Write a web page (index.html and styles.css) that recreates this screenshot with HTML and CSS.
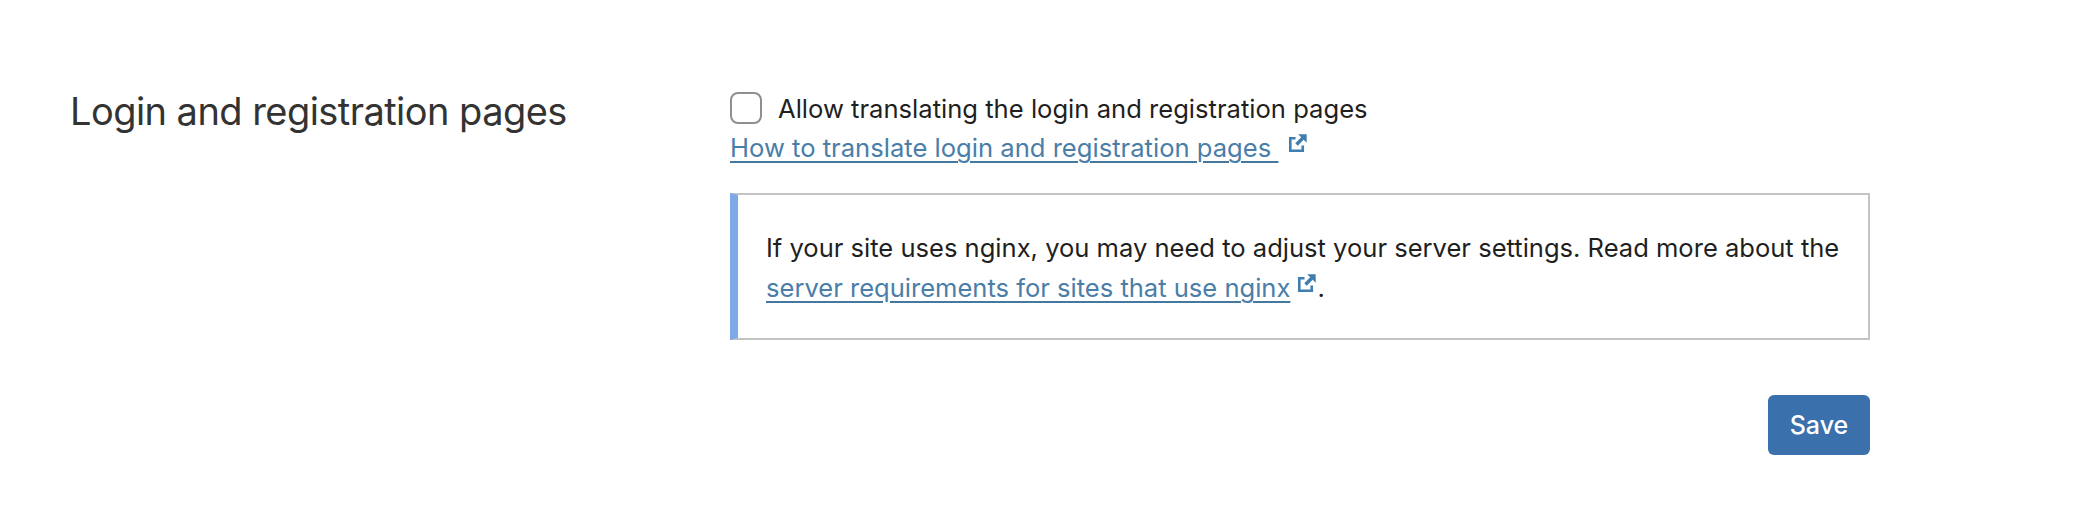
FILE: index.html
```html
<!DOCTYPE html>
<html lang="en">
<head>
  <meta charset="UTF-8" />
  <title>Login and registration pages</title>
  <link rel="stylesheet" href="styles.css">
</head>
<body>
  <div class="section">
    <h3 class="section-title">Login and registration pages</h3>
    <div class="section-body">
      <label class="check-row">
        <input type="checkbox" class="check" />
        <span>Allow translating the login and registration pages</span>
      </label>
      <p class="help-row">
        <a href="#" class="link">How to translate login and registration pages&nbsp;</a>
        <svg class="ext-icon ext-icon-wide" viewBox="0 0 16 16"><path d="M6.5 3H1.5v11.5H13V9.5h-2V12.5H3.5V5h3z M8.5 1H15v6.5l-2.3-2.3-4.5 4.5-1.9-1.9 4.5-4.5z"/></svg>
      </p>
      <div class="notice">
        If your site uses nginx, you may need to adjust your server settings. Read more about the
        <a href="#" class="link">server requirements for sites that use nginx</a><svg class="ext-icon" viewBox="0 0 16 16"><path d="M6.5 3H1.5v11.5H13V9.5h-2V12.5H3.5V5h3z M8.5 1H15v6.5l-2.3-2.3-4.5 4.5-1.9-1.9 4.5-4.5z"/></svg>.
      </div>
      <div class="actions">
        <button class="save-btn">Save</button>
      </div>
    </div>
  </div>
</body>
</html>
```

FILE: styles.css
```css
body {
  margin: 0;
  background: #fff;
  font-family: Inter, "Liberation Sans", sans-serif;
  color: #1f1f1f;
  font-size: 25.6px;
}
.section {
  display: flex;
  padding: 88px 220px 0 70px;
}
.section-title {
  width: 660px;
  margin: 0;
  font-size: 38px;
  letter-spacing: -0.55px;
  line-height: 47px;
  font-weight: 400;
  color: #333;
}
.section-body {
  flex: 1;
}
.check-row {
  display: flex;
  align-items: center;
  gap: 16px;
  height: 40px;
}
.check {
  appearance: none;
  width: 32px;
  height: 32px;
  margin: 0;
  border: 2.5px solid #8f8f8f;
  border-radius: 8px;
  background: #fff;
}
.help-row {
  margin: 0;
  height: 40px;
  line-height: 39px;
}
.link {
  color: #4a7ea8;
  text-decoration: underline;
  text-decoration-color: #45789f;
  text-decoration-thickness: 2px;
  text-underline-offset: 4px;
}
.ext-icon {
  width: 21px;
  height: 21px;
  fill: #3f7eae;
  margin-left: 6px;
  vertical-align: 3px;
}
.ext-icon-wide {
  margin-left: 1px;
}
.notice {
  box-sizing: border-box;
  height: 147px;
  margin-top: 25px;
  padding: 33px 20px 0 28px;
  border: 2px solid #c3c3c3;
  border-left: 8px solid #7da9e6;
  font-size: 25.55px;
  line-height: 40px;
}
.actions {
  display: flex;
  justify-content: flex-end;
  margin-top: 55px;
}
.save-btn {
  width: 102px;
  height: 60px;
  border: 0;
  border-radius: 6px;
  background: #3a70ac;
  color: #fff;
  font: 500 25px Inter, "Liberation Sans", sans-serif;
}
```
